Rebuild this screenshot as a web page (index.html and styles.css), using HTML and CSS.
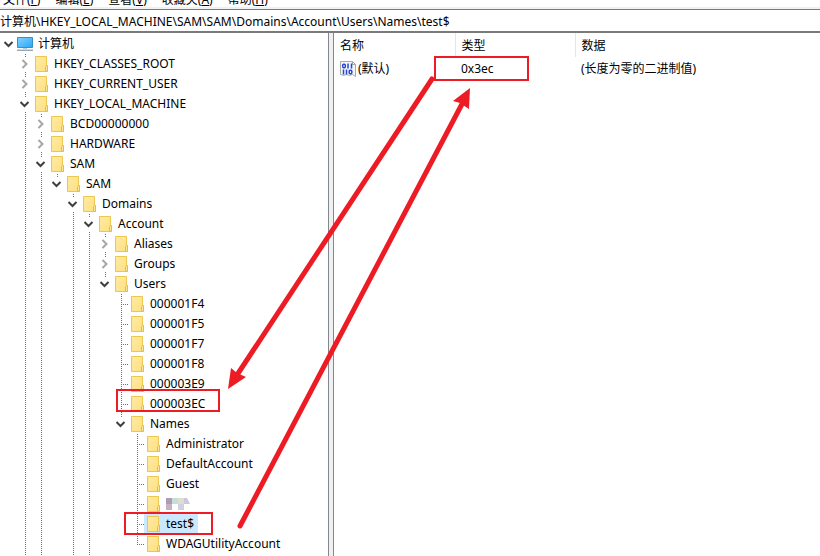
FILE: index.html
```html
<!DOCTYPE html>
<html lang="zh-CN">
<head>
  <meta charset="UTF-8">
  <meta name="viewport" content="width=device-width, initial-scale=1.0">
  <title>注册表编辑器</title>
  <link rel="stylesheet" href="styles.css">
</head>
<body>
  <!-- Shared icons -->
  <svg class="sprite" aria-hidden="true">
    <defs>
      <linearGradient id="paper" x1="0" y1="0" x2="1" y2="1">
        <stop offset="0" stop-color="#ffeba6"/>
        <stop offset="1" stop-color="#fddf7c"/>
      </linearGradient>
      <linearGradient id="screen" x1="0" y1="0" x2="1" y2="1">
        <stop offset="0" stop-color="#7fd3ff"/>
        <stop offset="1" stop-color="#2ba6f5"/>
      </linearGradient>
    </defs>
    <symbol id="folder" viewBox="0 0 14 16">
      <path d="M.5.5h11v9h1v6H.5z" fill="url(#paper)" stroke="#edc64d"/>
      <path d="M10.5 15V10.5l1-1h1v6h-2z" fill="#ffe694" stroke="#e8bd3f"/>
    </symbol>
    <symbol id="open" viewBox="0 0 16 14">
      <path d="M4.5 5l4 4 4-4" fill="none" stroke="#404040" stroke-width="2"/>
    </symbol>
    <symbol id="closed" viewBox="0 0 16 14">
      <path d="M6.5 3l4 4-4 4" fill="none" stroke="#a6a6a6" stroke-width="2"/>
    </symbol>
  </svg>

  <div class="window">
    <nav class="menu">
      <button>文件(<u>F</u>)</button>
      <button>编辑(<u>E</u>)</button>
      <button>查看(<u>V</u>)</button>
      <button>收藏夹(<u>A</u>)</button>
      <button>帮助(<u>H</u>)</button>
    </nav>
    <input class="address" type="text" aria-label="地址" value="计算机\HKEY_LOCAL_MACHINE\SAM\SAM\Domains\Account\Users\Names\test$">

    <div class="panes">
      <div class="tree">
        <div class="row root">
          <button class="toggle" aria-label="折叠"><svg><use href="#open"/></svg></button>
          <svg class="computer" viewBox="0 0 18 16">
            <path d="M1.5 1.5h15v10h-15z" fill="url(#screen)" stroke="#3a8fc4"/>
            <path d="M7 12h4v1H7z" fill="#b9cbd8"/>
            <path d="M1 13.5h16" stroke="#cfd9e1"/>
            <path d="M1 14.5h16" stroke="#93a9ba"/>
          </svg>
          <span class="name">计算机</span>
        </div>
        <ul>
          <li><div class="row"><button class="toggle" aria-label="展开"><svg><use href="#closed"/></svg></button><svg class="folder"><use href="#folder"/></svg><span class="name">HKEY_CLASSES_ROOT</span></div></li>
          <li><div class="row"><button class="toggle" aria-label="展开"><svg><use href="#closed"/></svg></button><svg class="folder"><use href="#folder"/></svg><span class="name">HKEY_CURRENT_USER</span></div></li>
          <li>
            <div class="row"><button class="toggle" aria-label="折叠"><svg><use href="#open"/></svg></button><svg class="folder"><use href="#folder"/></svg><span class="name">HKEY_LOCAL_MACHINE</span></div>
            <ul>
              <li><div class="row"><button class="toggle" aria-label="展开"><svg><use href="#closed"/></svg></button><svg class="folder"><use href="#folder"/></svg><span class="name">BCD00000000</span></div></li>
              <li><div class="row"><button class="toggle" aria-label="展开"><svg><use href="#closed"/></svg></button><svg class="folder"><use href="#folder"/></svg><span class="name">HARDWARE</span></div></li>
              <li>
                <div class="row"><button class="toggle" aria-label="折叠"><svg><use href="#open"/></svg></button><svg class="folder"><use href="#folder"/></svg><span class="name">SAM</span></div>
                <ul>
                  <li class="last">
                    <div class="row"><button class="toggle" aria-label="折叠"><svg><use href="#open"/></svg></button><svg class="folder"><use href="#folder"/></svg><span class="name">SAM</span></div>
                    <ul>
                      <li>
                        <div class="row"><button class="toggle" aria-label="折叠"><svg><use href="#open"/></svg></button><svg class="folder"><use href="#folder"/></svg><span class="name">Domains</span></div>
                        <ul>
                          <li class="more">
                            <div class="row"><button class="toggle" aria-label="折叠"><svg><use href="#open"/></svg></button><svg class="folder"><use href="#folder"/></svg><span class="name">Account</span></div>
                            <ul>
                              <li><div class="row"><button class="toggle" aria-label="展开"><svg><use href="#closed"/></svg></button><svg class="folder"><use href="#folder"/></svg><span class="name">Aliases</span></div></li>
                              <li><div class="row"><button class="toggle" aria-label="展开"><svg><use href="#closed"/></svg></button><svg class="folder"><use href="#folder"/></svg><span class="name">Groups</span></div></li>
                              <li class="last">
                                <div class="row"><button class="toggle" aria-label="折叠"><svg><use href="#open"/></svg></button><svg class="folder"><use href="#folder"/></svg><span class="name">Users</span></div>
                                <ul>
                                  <li><div class="row"><span class="stub"></span><svg class="folder"><use href="#folder"/></svg><span class="name">000001F4</span></div></li>
                                  <li><div class="row"><span class="stub"></span><svg class="folder"><use href="#folder"/></svg><span class="name">000001F5</span></div></li>
                                  <li><div class="row"><span class="stub"></span><svg class="folder"><use href="#folder"/></svg><span class="name">000001F7</span></div></li>
                                  <li><div class="row"><span class="stub"></span><svg class="folder"><use href="#folder"/></svg><span class="name">000001F8</span></div></li>
                                  <li><div class="row"><span class="stub"></span><svg class="folder"><use href="#folder"/></svg><span class="name">000003E9</span></div></li>
                                  <li><div class="row"><span class="stub"></span><svg class="folder"><use href="#folder"/></svg><span class="name">000003EC</span></div></li>
                                  <li class="last">
                                    <div class="row"><button class="toggle" aria-label="折叠"><svg><use href="#open"/></svg></button><svg class="folder"><use href="#folder"/></svg><span class="name">Names</span></div>
                                    <ul>
                                      <li><div class="row"><span class="stub"></span><svg class="folder"><use href="#folder"/></svg><span class="name">Administrator</span></div></li>
                                      <li><div class="row"><span class="stub"></span><svg class="folder"><use href="#folder"/></svg><span class="name">DefaultAccount</span></div></li>
                                      <li><div class="row"><span class="stub"></span><svg class="folder"><use href="#folder"/></svg><span class="name">Guest</span></div></li>
                                      <li>
                                        <div class="row">
                                          <span class="stub"></span><svg class="folder"><use href="#folder"/></svg>
                                          <svg class="mosaic" viewBox="0 0 24 12">
                                            <path d="M0 0h6v6H0z" fill="#ae9cb6"/>
                                            <path d="M6 0h6v6H6z" fill="#c4dfd8"/>
                                            <path d="M12 0h6v6h-6z" fill="#dfdfd1"/>
                                            <path d="M18 0h3l3 6h-6z" fill="#cbc8d9"/>
                                            <path d="M0 6h6v6H0z" fill="#c5b3c0"/>
                                            <path d="M12 6h6v6h-6z" fill="#d0d0e0"/>
                                          </svg>
                                        </div>
                                      </li>
                                      <li><div class="row selected"><span class="stub"></span><svg class="folder"><use href="#folder"/></svg><span class="name">test$</span></div></li>
                                      <li class="last"><div class="row"><span class="stub"></span><svg class="folder"><use href="#folder"/></svg><span class="name">WDAGUtilityAccount</span></div></li>
                                    </ul>
                                  </li>
                                </ul>
                              </li>
                            </ul>
                          </li>
                        </ul>
                      </li>
                    </ul>
                  </li>
                </ul>
              </li>
            </ul>
          </li>
        </ul>
      </div>

      <div class="values">
        <table>
          <thead>
            <tr><th class="col-name">名称</th><th class="col-type">类型</th><th>数据</th></tr>
          </thead>
          <tbody>
            <tr>
              <td>
                <div class="value">
                  <svg class="binary" viewBox="0 0 16 16">
                    <path d="M.5.5h12l3 3v12l-3-2-3 1-3-1-3 1-3-1z" fill="#f4f6fa" stroke="#a9a9a9"/>
                    <path d="M12.5.5v3h3" fill="none" stroke="#a9a9a9"/>
                    <g fill="none" stroke="#2347d9" stroke-width="1.5">
                      <rect x="2.7" y="3.2" width="2.6" height="3.6" rx="1"/>
                      <path d="M8 2.5v5M11.5 2.5v5M3.5 8.5v5M6.5 8.5v5"/>
                      <rect x="9.2" y="9.2" width="2.6" height="3.6" rx="1"/>
                    </g>
                  </svg>
                  (默认)
                </div>
              </td>
              <td>0x3ec</td>
              <td>(长度为零的二进制值)</td>
            </tr>
          </tbody>
        </table>
      </div>
    </div>

    <!-- Red marks drawn over the window -->
    <svg class="marks" width="820" height="556" viewBox="0 0 820 556">
      <g fill="none" stroke="#ed1c24" stroke-width="2">
        <rect x="435" y="57" width="93" height="23"/>
        <rect x="117" y="390" width="102" height="21"/>
        <rect x="125" y="513" width="87" height="21"/>
      </g>
      <g stroke="#ed1c24" stroke-width="5" stroke-linecap="round">
        <path d="M432 79L237 375"/>
        <path d="M240 526L462 104"/>
      </g>
      <g fill="#ed1c24">
        <path d="M228 389l3-21 6 5 9 4z"/>
        <path d="M470 88l-17 13 7 2 9 6z"/>
      </g>
    </svg>
  </div>
</body>
</html>
```
FILE: styles.css
```css
* {
  box-sizing: border-box;
}
body {
  margin: 0;
  background: #fff;
  color: #000;
  font-family: "Noto Sans", "Noto Sans CJK SC", sans-serif;
  font-size: 12px;
  line-height: 20px;
}
button {
  border: 0;
  padding: 0;
  background: none;
  color: inherit;
  font: inherit;
}
svg {
  display: block;
  flex: none;
}
.sprite {
  position: absolute;
  width: 0;
  height: 0;
}
.window {
  position: relative;
  display: flex;
  flex-direction: column;
  height: 100vh;
  overflow: hidden;
}

/* Menu and address bar */
.menu {
  display: flex;
  flex: none;
  align-items: flex-end;
  gap: 15px;
  height: 9px;
  padding: 0 3px;
  border-bottom: 2px solid #f0f0f0;
  overflow: hidden;
}
.menu button {
  flex: none;
  line-height: 14px;
}
.address {
  flex: none;
  width: 100%;
  height: 24px;
  padding: 0;
  border: solid #7a7a7a;
  border-width: 1px 0 2px;
  outline: 0;
  background: #fff;
  color: inherit;
  font: inherit;
}

.panes {
  display: flex;
  flex: 1;
  min-height: 0;
  background: #f0f0f0;
  gap: 4px;
}

/* Key tree */
.tree {
  flex: none;
  width: 329px;
  padding-top: 1px;
  border-right: 1px solid #828790;
  background: #fff;
  overflow: hidden;
}
.tree ul {
  margin: 0;
  padding: 0 0 0 16px;
  list-style: none;
}
.tree li {
  background: linear-gradient(#707070 1px, transparent 1px) 9px 0 / 1px 2px repeat-y;
}
.tree li.last {
  background: none;
}
.tree li.last > .row {
  background: linear-gradient(#707070 1px, transparent 1px) 9px 0 / 1px 2px repeat-y;
}
.tree li.more {
  padding-bottom: 20px;
}
.row {
  display: flex;
  align-items: center;
  height: 20px;
}
.toggle {
  width: 16px;
  height: 14px;
  background: #fff;
}
.toggle svg {
  width: 16px;
  height: 14px;
}
/* The line stops at the last key of a branch */
.tree li.last > .row > .toggle {
  align-self: flex-end;
  height: 17px;
  padding-bottom: 3px;
}
.stub {
  width: 7px;
  height: 1px;
  margin-left: 9px;
  background: linear-gradient(90deg, #707070 1px, transparent 1px) 0 0 / 2px 1px;
}
.tree li.last > .row > .stub {
  align-self: flex-end;
  height: 10px;
  background: linear-gradient(90deg, #707070 1px, transparent 1px) 0 0 / 2px 1px repeat-x, #fff;
}
.folder {
  width: 14px;
  height: 16px;
  margin-left: 3px;
}
.computer {
  width: 18px;
  height: 16px;
}
.name {
  padding: 0 4px 0 5px;
  white-space: nowrap;
}
.root .name {
  padding-left: 4px;
}
.selected .name {
  background: #cce8ff;
}
.selected .folder {
  box-sizing: content-box;
  margin-left: 0;
  padding: 2px 0 2px 3px;
  background: #cce8ff;
}
.mosaic {
  width: 24px;
  height: 12px;
  margin-left: 5px;
}

/* Value list */
.values {
  flex: 1;
  border-left: 1px solid #828790;
  background: #fff;
}
table {
  width: 100%;
  border-collapse: collapse;
  table-layout: fixed;
}
th,
td {
  height: 24px;
  padding: 0 6px;
  font-weight: normal;
  text-align: left;
}
th {
  padding-top: 2px;
  border-right: 1px solid #e5e5e5;
}
th:last-child {
  border-right: 0;
}
.col-name {
  width: 121px;
}
.col-type {
  width: 120px;
}
.value {
  display: flex;
  align-items: center;
  gap: 2px;
}
.binary {
  width: 16px;
  height: 16px;
}
.marks {
  position: absolute;
  top: 0;
  left: 0;
  pointer-events: none;
}
```
